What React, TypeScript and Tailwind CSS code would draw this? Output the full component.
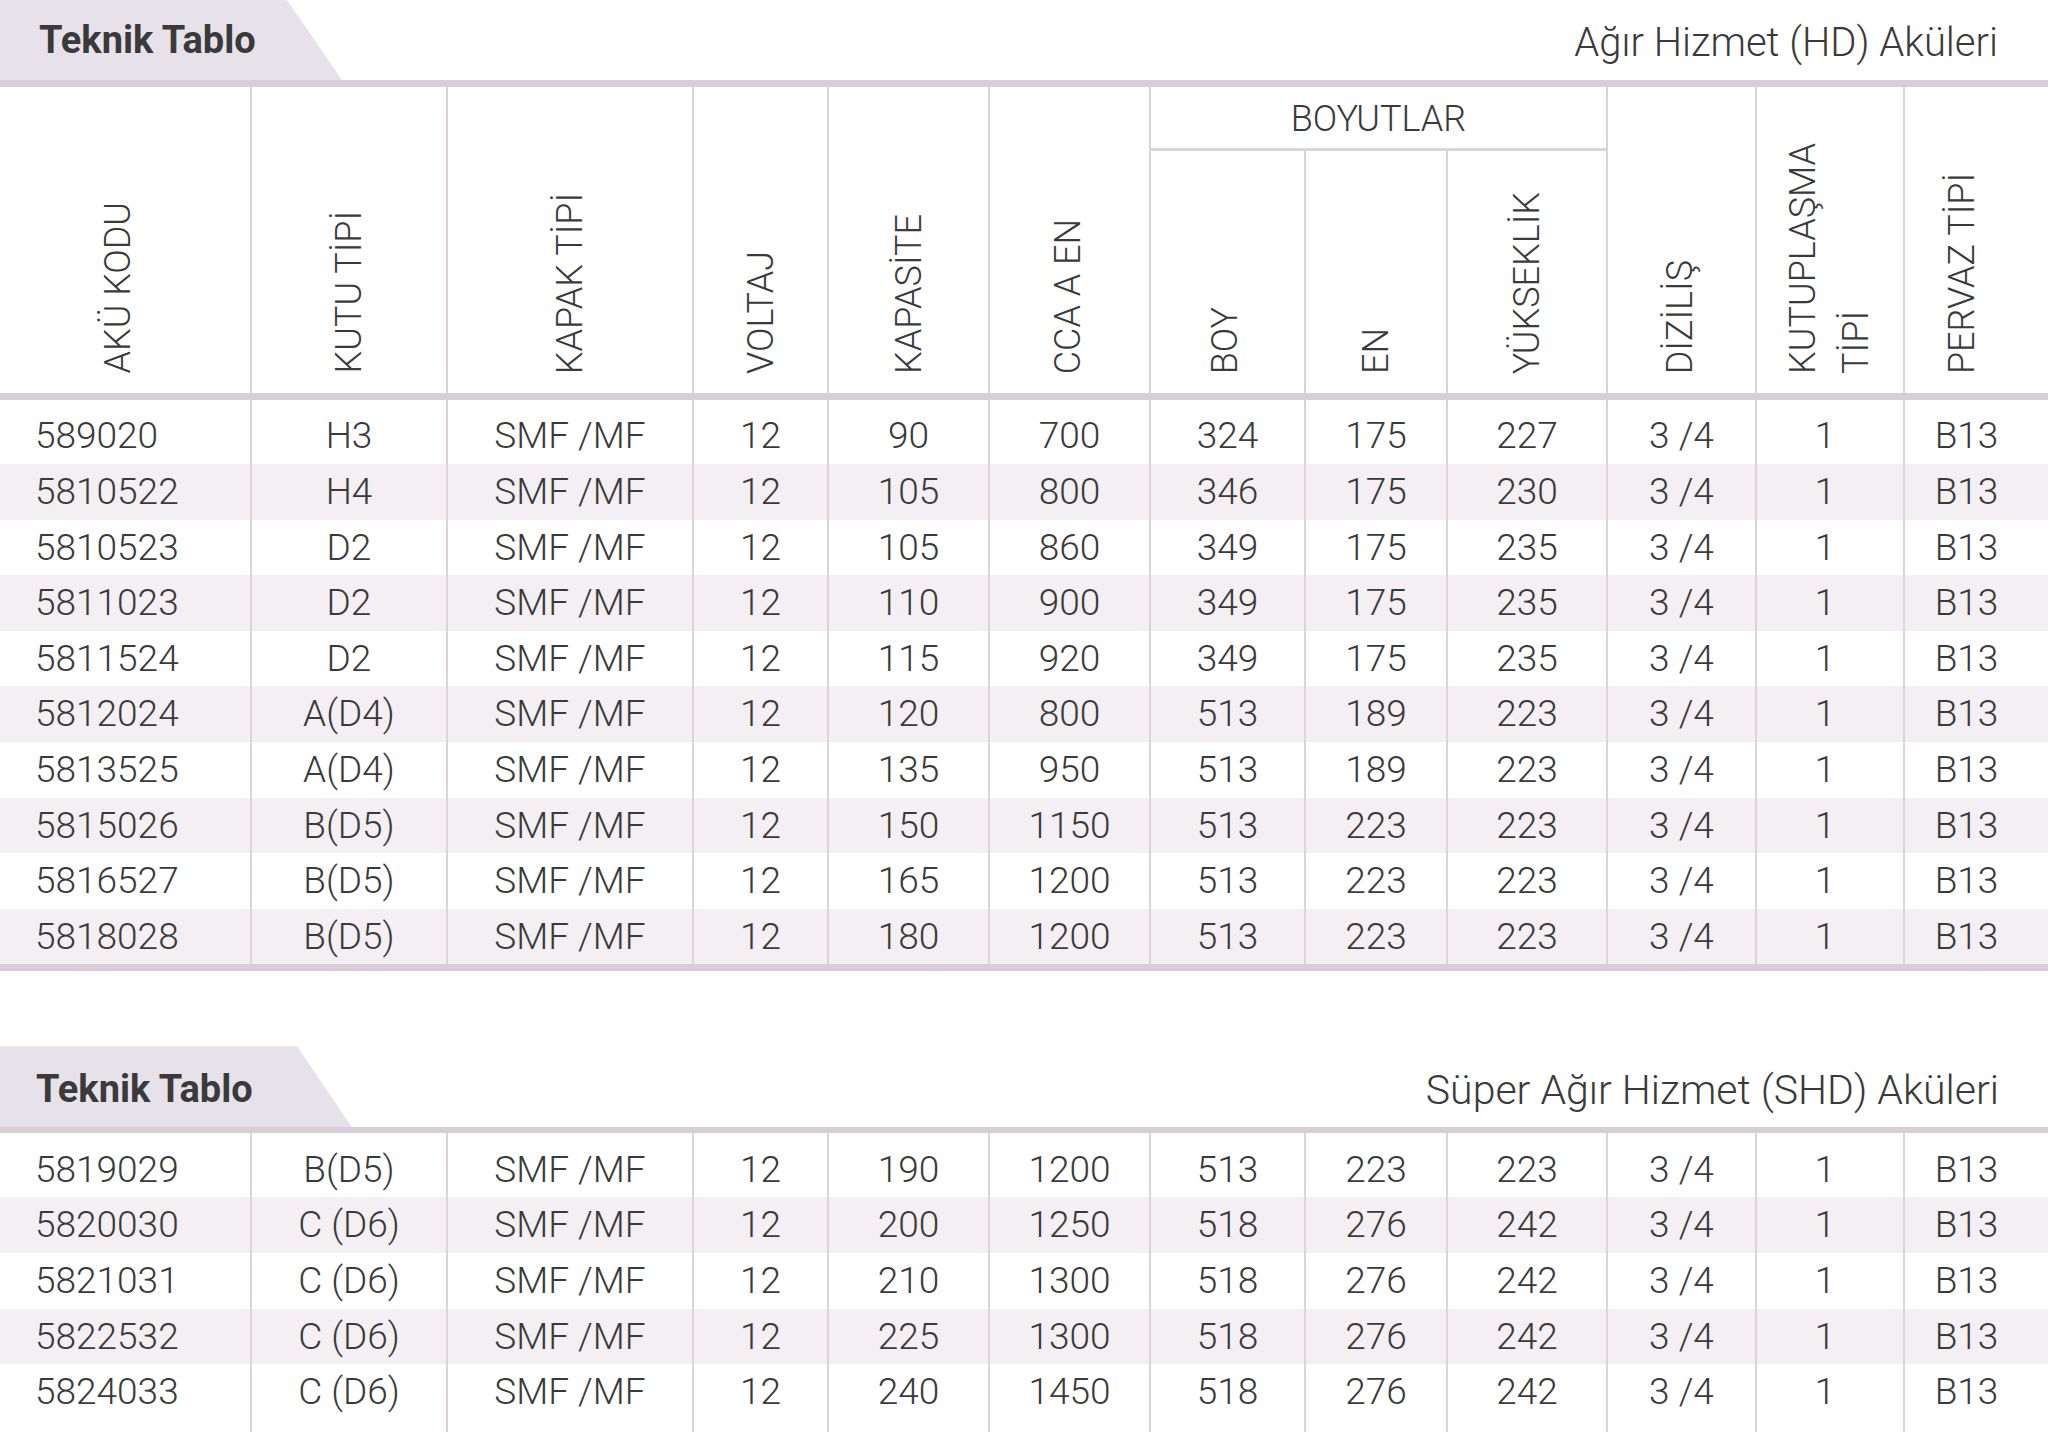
import React from "react";

const COLS =
  "grid grid-cols-[250px_196px_246px_135px_161px_161px_155px_142px_160px_149px_148px_145px]";

const hd = [
  ["589020", "H3", "SMF /MF", "12", "90", "700", "324", "175", "227", "3 /4", "1", "B13"],
  ["5810522", "H4", "SMF /MF", "12", "105", "800", "346", "175", "230", "3 /4", "1", "B13"],
  ["5810523", "D2", "SMF /MF", "12", "105", "860", "349", "175", "235", "3 /4", "1", "B13"],
  ["5811023", "D2", "SMF /MF", "12", "110", "900", "349", "175", "235", "3 /4", "1", "B13"],
  ["5811524", "D2", "SMF /MF", "12", "115", "920", "349", "175", "235", "3 /4", "1", "B13"],
  ["5812024", "A(D4)", "SMF /MF", "12", "120", "800", "513", "189", "223", "3 /4", "1", "B13"],
  ["5813525", "A(D4)", "SMF /MF", "12", "135", "950", "513", "189", "223", "3 /4", "1", "B13"],
  ["5815026", "B(D5)", "SMF /MF", "12", "150", "1150", "513", "223", "223", "3 /4", "1", "B13"],
  ["5816527", "B(D5)", "SMF /MF", "12", "165", "1200", "513", "223", "223", "3 /4", "1", "B13"],
  ["5818028", "B(D5)", "SMF /MF", "12", "180", "1200", "513", "223", "223", "3 /4", "1", "B13"],
];

const shd = [
  ["5819029", "B(D5)", "SMF /MF", "12", "190", "1200", "513", "223", "223", "3 /4", "1", "B13"],
  ["5820030", "C (D6)", "SMF /MF", "12", "200", "1250", "518", "276", "242", "3 /4", "1", "B13"],
  ["5821031", "C (D6)", "SMF /MF", "12", "210", "1300", "518", "276", "242", "3 /4", "1", "B13"],
  ["5822532", "C (D6)", "SMF /MF", "12", "225", "1300", "518", "276", "242", "3 /4", "1", "B13"],
  ["5824033", "C (D6)", "SMF /MF", "12", "240", "1450", "518", "276", "242", "3 /4", "1", "B13"],
];

function cellClass(i: number, first: boolean) {
  const pad = first ? " pt-2" : "";
  if (i === 0) return "flex items-center pl-[35px]" + pad;
  if (i === 10) return "flex items-center justify-center border-l-2 border-[#ddd3db] pr-[10px]" + pad;
  if (i === 11) return "flex items-center justify-center border-l-2 border-[#ddd3db] pr-[20px]" + pad;
  return "flex items-center justify-center border-l-2 border-[#ddd3db]" + pad;
}

function Row({ cells, index }: { cells: string[]; index: number }) {
  const first = index === 0;
  const striped = index % 2 === 1;
  return (
    <div className={`${COLS} ${first ? "h-[64px]" : "h-[55.6px]"} ${striped ? "bg-[#f3eff3]" : ""}`}>
      {cells.map((c, i) => (
        <div key={i} className={cellClass(i, first)}>
          {c}
        </div>
      ))}
    </div>
  );
}

function Vert({ children, two }: { children: React.ReactNode; two?: boolean }) {
  return (
    <span
      className={`[writing-mode:vertical-rl] rotate-180 whitespace-nowrap ${two ? "leading-[53px]" : "leading-none"}`}
    >
      {children}
    </span>
  );
}

const hcell = "row-span-2 flex items-end justify-center pb-[19px] border-l-2 border-[#ddd3db]";
const subcell = "flex items-end justify-center pb-[19px] border-l-2 border-[#ddd3db]";

function Header() {
  return (
    <div className={`${COLS} grid-rows-[64px_242px] h-[306px] text-[36px] font-light`}>
      <div className="row-span-2 flex items-end justify-center pb-[19px] pr-[14px]">
        <Vert>AKÜ KODU</Vert>
      </div>
      <div className={hcell}>
        <Vert>KUTU TİPİ</Vert>
      </div>
      <div className={hcell}>
        <Vert>KAPAK TİPİ</Vert>
      </div>
      <div className={hcell}>
        <Vert>VOLTAJ</Vert>
      </div>
      <div className={hcell}>
        <Vert>KAPASİTE</Vert>
      </div>
      <div className={hcell + " pr-[4px]"}>
        <Vert>CCA A EN</Vert>
      </div>
      <div className="col-span-3 flex items-center justify-center pt-[2px] border-l-2 border-b-[3px] border-[#ddd3db] leading-none">
        BOYUTLAR
      </div>
      <div className={hcell + " pr-[4px]"}>
        <Vert>DİZİLİŞ</Vert>
      </div>
      <div className={hcell}>
        <Vert two>
          KUTUPLAŞMA
          <br />
          TİPİ
        </Vert>
      </div>
      <div className={hcell + " pr-[30px]"}>
        <Vert>PERVAZ TİPİ</Vert>
      </div>
      <div className={subcell + " col-start-7 row-start-2 pr-[6px]"}>
        <Vert>BOY</Vert>
      </div>
      <div className={subcell + " col-start-8 row-start-2"}>
        <Vert>EN</Vert>
      </div>
      <div className={subcell + " col-start-9 row-start-2"}>
        <Vert>YÜKSEKLİK</Vert>
      </div>
    </div>
  );
}

export default function App() {
  return (
    <div className="w-[2048px] h-[1432px] overflow-hidden bg-white flex flex-col text-[#3a3a3a] font-['Roboto','Liberation_Sans',sans-serif]">
      {/* HD */}
      <div className="flex h-[80px] items-stretch justify-between">
        <div className="w-[342px] bg-[#e7e1ea] [clip-path:polygon(0_0,287px_0,342px_100%,0_100%)] flex items-center pl-[39px] text-[38px] font-bold">
          Teknik Tablo
        </div>
        <div className="flex items-center pr-[50px] pt-[6px] text-[40px] font-light">
          Ağır Hizmet (HD) Aküleri
        </div>
      </div>
      <div className="h-[7px] bg-[#d9ced7]" />
      <Header />
      <div className="h-[7px] bg-[#d9ced7]" />
      <div className="text-[37px] font-light">
        {hd.map((r, i) => (
          <Row key={i} cells={r} index={i} />
        ))}
      </div>
      <div className="h-[7px] bg-[#d9ced7]" />

      {/* SHD */}
      <div className="flex h-[81px] mt-[75px] items-stretch justify-between">
        <div className="w-[352px] bg-[#e7e1ea] [clip-path:polygon(0_0,297px_0,352px_100%,0_100%)] flex items-center pl-[36px] pt-[6px] text-[38px] font-bold">
          Teknik Tablo
        </div>
        <div className="flex items-center pr-[49px] pt-[8px] text-[41px] font-light">
          Süper Ağır Hizmet (SHD) Aküleri
        </div>
      </div>
      <div className="h-[6px] bg-[#d9ced7]" />
      <div className="text-[37px] font-light">
        {shd.map((r, i) => (
          <Row key={i} cells={r} index={i} />
        ))}
      </div>
      <div className={`${COLS} flex-1`}>
        {Array.from({ length: 12 }).map((_, i) => (
          <div key={i} className={i === 0 ? "" : "border-l-2 border-[#ddd3db]"} />
        ))}
      </div>
    </div>
  );
}
